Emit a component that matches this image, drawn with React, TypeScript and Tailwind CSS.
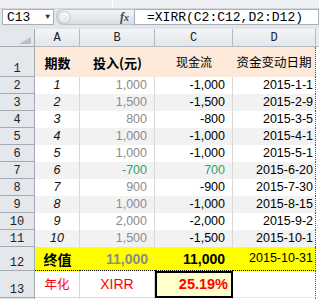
import React from 'react'

interface DataRow {
    n: string
    a: string
    b: string
    c: string
    d: string
    green?: boolean
}

const rows: DataRow[] = [
    { n: '2', a: '1', b: '1,000', c: '-1,000', d: '2015-1-1' },
    { n: '3', a: '2', b: '1,500', c: '-1,500', d: '2015-2-9' },
    { n: '4', a: '3', b: '800', c: '-800', d: '2015-3-5' },
    { n: '5', a: '4', b: '1,000', c: '-1,000', d: '2015-4-1' },
    { n: '6', a: '5', b: '1,000', c: '-1,000', d: '2015-5-1' },
    { n: '7', a: '6', b: '-700', c: '700', d: '2015-6-20', green: true },
    { n: '8', a: '7', b: '900', c: '-900', d: '2015-7-30' },
    { n: '9', a: '8', b: '1,000', c: '-1,000', d: '2015-8-15' },
    { n: '10', a: '9', b: '2,000', c: '-2,000', d: '2015-9-2' },
    { n: '11', a: '10', b: '1,500', c: '-1,500', d: '2015-10-1' },
]

const mono = "font-['Liberation_Mono','Noto_Sans_CJK_SC',monospace]"
const sans = "font-['Liberation_Sans','Noto_Sans_CJK_SC',sans-serif]"
const cjk = "font-['Noto_Sans_CJK_SC','Liberation_Sans',sans-serif]"

function RowHead({ label, h }: { label: string; h: string }) {
    return (
        <div className={`${h} ${mono} flex items-end justify-center overflow-hidden border-r border-b border-[#a3aab3] bg-[#e4e7eb] pb-[1px] text-[12px] leading-none text-[#222]`}>
            {label}
        </div>
    )
}

export default function App() {
    return (
        <div className="h-[299px] w-[319px] overflow-hidden bg-[#e2e6eb]">
            {/* ribbon edge */}
            <div className="flex h-[9px] border-b border-[#d3d8de] bg-[#eef0f3]">
                <div className="w-[113px] border-r border-white" />
            </div>

            {/* formula bar */}
            <div className="flex h-[16px] pl-[2px]">
                <div className={`${mono} flex w-[52px] items-center justify-between border border-[#a8afb8] bg-white pr-[3px] pl-[4px] text-[13px] leading-none text-black`}>
                    <span>C13</span>
                    <span className="text-[8px] text-[#333]">▼</span>
                </div>
                <div className="ml-[2px] flex w-[78px] items-center justify-between rounded-l-full border border-r-0 border-[#b9c0c8] bg-gradient-to-b from-[#f4f5f7] to-[#d9dde2] pr-[5px] pl-[1px]">
                    <div className="h-[13px] w-[13px] rounded-full border border-[#c2c8cf] bg-gradient-to-b from-[#fbfbfc] to-[#dfe2e6]" />
                    <span className="font-['Liberation_Serif',serif] text-[12px] leading-none font-bold text-[#444] italic">
                        f<span className="text-[10px]">x</span>
                    </span>
                </div>
                <div className={`${mono} flex flex-1 items-center border border-[#a8afb8] bg-white pl-[12px] text-[13px] leading-none text-black`}>
                    =XIRR(C2:C12,D2:D12)
                </div>
            </div>

            <div className="h-[4px]" />

            {/* sheet */}
            <div className="grid grid-cols-[35px_45px_75px_78px_83px_1fr] leading-none">
                {/* column headers */}
                <div className="relative h-[18px] border-r border-b border-[#a3aab3] bg-[#e4e7eb]">
                    <svg className="absolute right-[3px] bottom-[2px]" width="12" height="7" viewBox="0 0 12 7">
                        <polygon points="12,0 12,7 0,7" fill="#b8bec6" />
                    </svg>
                </div>
                {['A', 'B', 'C', 'D'].map((l) => (
                    <div
                        key={l}
                        className={`${mono} flex h-[18px] items-center justify-center border-r border-b border-[#b4bbc4] bg-gradient-to-b from-[#f3f5f7] to-[#e3e6ea] text-[12px] text-[#222]`}
                    >
                        {l}
                    </div>
                ))}
                <div className="h-[18px] border-b border-[#b4bbc4] bg-[#e9ecef]" />

                {/* row 1 */}
                <RowHead label="1" h="h-[30px]" />
                <div className={`${cjk} flex items-center justify-center bg-[#fde9d9] text-[13px] font-bold text-black`}>期数</div>
                <div className={`${cjk} flex items-center justify-center bg-[#fde9d9] text-[13px] font-bold text-black`}>投入(元)</div>
                <div className={`${cjk} flex items-center justify-center bg-[#fde9d9] text-[12px] text-black`}>现金流</div>
                <div className={`${cjk} flex items-center justify-center border-r border-dotted border-r-[#555] bg-[#fde9d9] text-[12.5px] text-black`}>资金变动日期</div>
                <div className="bg-white" />

                {rows.map((r, i) => {
                    const bg = i % 2 === 1 ? 'bg-[#f2f2f2]' : 'bg-white'
                    return (
                        <React.Fragment key={r.n}>
                            <RowHead label={r.n} h="h-[17px]" />
                            <div className={`${bg} ${sans} flex h-[17px] items-center justify-center border-r border-[#d9d9d9] text-[12.5px] text-[#111] italic`}>{r.a}</div>
                            <div className={`${bg} ${sans} flex h-[17px] items-center justify-end border-r border-[#d9d9d9] pr-[7px] text-[12.5px] ${r.green ? 'text-[#2fa56c]' : 'text-[#8c8c8c]'}`}>{r.b}</div>
                            <div className={`${bg} ${sans} flex h-[17px] items-center justify-end border-r border-[#d9d9d9] pr-[7px] text-[12.5px] ${r.green ? 'text-[#2fa56c]' : 'text-black'}`}>{r.c}</div>
                            <div className={`${bg} ${sans} flex h-[17px] items-center justify-end border-r border-dotted border-r-[#555] pr-[2px] text-[12.5px] text-black`}>{r.d}</div>
                            <div className="h-[17px] bg-white" />
                        </React.Fragment>
                    )
                })}

                {/* row 12 */}
                <RowHead label="12" h="h-[24px]" />
                <div className={`${cjk} flex h-[24px] items-center justify-center border-b border-dotted border-black bg-[#ffff00] text-[14px] font-bold text-black`}>终值</div>
                <div className={`${sans} flex h-[24px] items-center justify-end border-b border-dotted border-black bg-[#ffff00] pr-[7px] text-[14px] font-bold text-[#8c8c8c]`}>11,000</div>
                <div className={`${sans} flex h-[24px] items-center justify-end border-b border-dotted border-black bg-[#ffff00] pr-[8px] text-[14px] font-bold text-black`}>11,000</div>
                <div className={`${sans} flex h-[24px] items-center justify-end border-r border-b border-dotted border-[#555] border-b-black bg-[#ffff00] pr-[2px] text-[12.5px] text-black`}>2015-10-31</div>
                <div className="h-[24px] bg-white" />

                {/* row 13 */}
                <RowHead label="13" h="h-[27px]" />
                <div className={`${cjk} flex h-[27px] items-center justify-center border-r border-b border-[#d9d9d9] bg-white text-[12.5px] text-[#ff0000]`}>年化</div>
                <div className={`${sans} flex h-[27px] items-center justify-center border-r border-b border-[#d9d9d9] bg-white text-[14px] text-[#ff0000]`}>XIRR</div>
                <div className={`${sans} flex h-[27px] items-center justify-end border-2 border-black bg-[#ffffcc] pr-[3px] text-[14.5px] font-bold text-[#ff0000]`}>25.19%</div>
                <div className="h-[27px] border-r border-b border-dotted border-[#555] border-b-[#d9d9d9] bg-white" />
                <div className="h-[27px] bg-white" />

                {/* row 14 (partial) */}
                <RowHead label="" h="h-[17px]" />
                <div className="border-r border-[#d9d9d9] bg-white" />
                <div className="border-r border-[#d9d9d9] bg-white" />
                <div className="border-r border-[#d9d9d9] bg-white" />
                <div className="border-r border-dotted border-[#555] bg-white" />
                <div className="bg-white" />
            </div>
        </div>
    )
}
